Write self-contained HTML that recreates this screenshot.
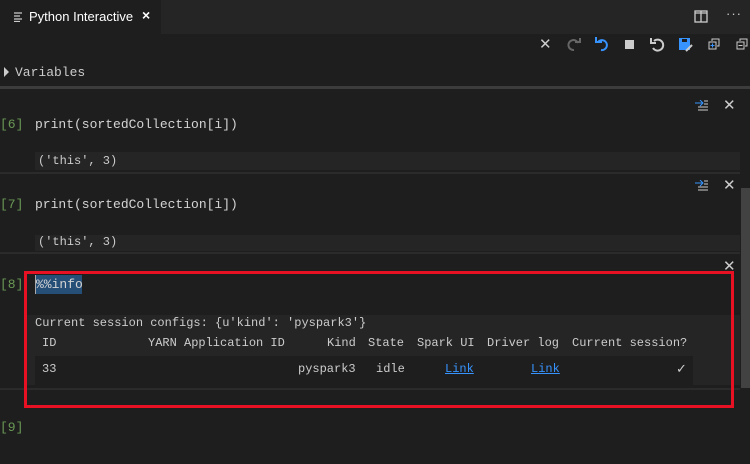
<!DOCTYPE html>
<html><head><style>
body{margin:0;width:750px;height:464px;background:#1e1e1e;overflow:hidden;position:relative;font-family:"Liberation Sans",sans-serif;color:#ccc}
.a{position:absolute}
.mono{font-family:"Liberation Mono",monospace}
.num{color:#6a9955;font-size:13px}
.code{color:#d4d4d4;font-size:13px}
.out{font-size:12px;color:#ccc}
.x{color:#ccc;font-size:15px}
</style></head><body>
<div class="a" style="left:0;top:0;width:750px;height:34px;background:#252526"></div>
<div class="a" style="left:0;top:0;width:161px;height:34px;background:#1e1e1e"></div>
<svg class="a" style="left:14px;top:12px" width="10" height="10"><path d="M0 1h8M0 4h6M0 7h8M0 9.5h6" stroke="#ccc" stroke-width="1.2"/></svg>
<div class="a" style="left:29px;top:9px;font-size:13px;color:#fff">Python Interactive</div>
<div class="a" style="left:142px;top:7px;font-size:14px;color:#fff;font-weight:bold">×</div>
<svg class="a" style="left:694px;top:10px" width="14" height="14"><rect x="1" y="1" width="12" height="11" fill="none" stroke="#ccc" stroke-width="1.3"/><path d="M7 1v11M1 3h12" stroke="#ccc" stroke-width="1.3"/></svg>
<div class="a" style="left:726px;top:6px;font-size:13px;color:#ccc;letter-spacing:1px">···</div>
<div class="a x" style="left:539px;top:35px">✕</div>
<svg class="a" style="left:567px;top:38px" width="14" height="14"><path d="M11 5A5 5 0 1 0 7 12" fill="none" stroke="#666" stroke-width="2"/><path d="M8 4h5V0" fill="none" stroke="#666" stroke-width="2"/></svg>
<svg class="a" style="left:595px;top:37px" width="14" height="15"><path d="M3 5A5 5 0 1 1 6 13" fill="none" stroke="#3794ff" stroke-width="2"/><path d="M7 5H1V0" fill="none" stroke="#3794ff" stroke-width="2"/></svg>
<div class="a" style="left:625px;top:40px;width:9px;height:9px;background:#ccc"></div>
<svg class="a" style="left:650px;top:37px" width="15" height="15"><path d="M4 4A5.5 5.5 0 1 1 3 11" fill="none" stroke="#ccc" stroke-width="2"/><path d="M1 1v5h5" fill="none" stroke="#ccc" stroke-width="2"/></svg>
<svg class="a" style="left:678px;top:37px" width="16" height="15"><rect x="1" y="1" width="11" height="12" fill="#3794ff"/><rect x="4" y="2" width="5" height="3" fill="#1e1e1e"/><path d="M8 14l6-6" stroke="#ccc" stroke-width="2"/></svg>
<svg class="a" style="left:708px;top:38px" width="12" height="12"><path d="M4 3V1h7v7H9" fill="none" stroke="#ccc"/><rect x="1" y="4" width="7" height="7" fill="none" stroke="#ccc"/><path d="M4.5 5.5v4M2.5 7.5h4" stroke="#3794ff"/></svg>
<svg class="a" style="left:736px;top:38px" width="12" height="12"><path d="M4 3V1h7v7H9" fill="none" stroke="#ccc"/><rect x="1" y="4" width="7" height="7" fill="none" stroke="#ccc"/><path d="M2.5 7.5h4" stroke="#ccc"/></svg>
<svg class="a" style="left:4px;top:67px" width="6" height="10"><path d="M0 0l5 5-5 5z" fill="#ccc"/></svg>
<div class="a mono" style="left:15px;top:65px;font-size:13px;color:#ccc">Variables</div>
<div class="a" style="left:0;top:86px;width:750px;height:3px;background:#3c3c3c"></div>
<svg class="a" style="left:695px;top:100px" width="14" height="11"><path d="M0 3h8M5 0l3 3-3 3" fill="none" stroke="#3794ff"/><path d="M9 1h4M9 4h4M3 7h10M3 10h10" stroke="#ccc"/></svg>
<div class="a x" style="left:723px;top:96px">✕</div>
<div class="a mono num" style="left:0;top:117px">[6]</div>
<div class="a mono code" style="left:35px;top:117px">print(sortedCollection[i])</div>
<div class="a" style="left:35px;top:152px;width:705px;height:18px;background:#252526"></div>
<div class="a mono out" style="left:38px;top:154px">('this', 3)</div>
<div class="a" style="left:0;top:172px;width:740px;height:2px;background:#2b2b2b"></div>
<svg class="a" style="left:695px;top:180px" width="14" height="11"><path d="M0 3h8M5 0l3 3-3 3" fill="none" stroke="#3794ff"/><path d="M9 1h4M9 4h4M3 7h10M3 10h10" stroke="#ccc"/></svg>
<div class="a x" style="left:723px;top:176px">✕</div>
<div class="a mono num" style="left:0;top:197px">[7]</div>
<div class="a mono code" style="left:35px;top:197px">print(sortedCollection[i])</div>
<div class="a" style="left:35px;top:235px;width:705px;height:16px;background:#252526"></div>
<div class="a mono out" style="left:38px;top:235px">('this', 3)</div>
<div class="a" style="left:0;top:252px;width:740px;height:2px;background:#2b2b2b"></div>
<div class="a" style="left:741px;top:188px;width:9px;height:200px;background:#424242"></div>
<div class="a x" style="left:723px;top:257px">✕</div>
<div class="a mono num" style="left:0;top:277px">[8]</div>
<div class="a" style="left:35px;top:275px;width:46px;height:19px;background:#264f78;border-left:1px solid #aaa"></div>
<div class="a mono code" style="left:36px;top:277px">%%info</div>
<div class="a" style="left:25px;top:315px;width:715px;height:70px;background:#252526"></div>
<div class="a" style="left:35px;top:356px;width:658px;height:29px;background:#1e1e1e"></div>
<div class="a mono out" style="left:35px;top:316px;white-space:pre">Current session configs: {u'kind': 'pyspark3'}</div>
<div class="a mono out" style="left:42px;top:336px;white-space:pre">ID</div>
<div class="a mono out" style="left:148px;top:336px;white-space:pre">YARN Application ID</div>
<div class="a mono out" style="left:327px;top:336px;white-space:pre">Kind</div>
<div class="a mono out" style="left:368px;top:336px;white-space:pre">State</div>
<div class="a mono out" style="left:417px;top:336px;white-space:pre">Spark UI</div>
<div class="a mono out" style="left:487px;top:336px;white-space:pre">Driver log</div>
<div class="a mono out" style="left:572px;top:336px;white-space:pre">Current session?</div>
<div class="a mono out" style="left:42px;top:362px">33</div>
<div class="a mono out" style="left:298px;top:362px">pyspark3</div>
<div class="a mono out" style="left:376px;top:362px">idle</div>
<div class="a mono out" style="left:445px;top:362px;color:#3794ff;text-decoration:underline">Link</div>
<div class="a mono out" style="left:531px;top:362px;color:#3794ff;text-decoration:underline">Link</div>
<div class="a out" style="left:676px;top:361px;font-size:13px">✓</div>
<div class="a" style="left:0;top:388px;width:740px;height:2px;background:#2b2b2b"></div>
<div class="a" style="left:24px;top:271px;width:704px;height:131px;border:3px solid #e81123"></div>
<div class="a mono num" style="left:0;top:420px">[9]</div>
</body></html>
